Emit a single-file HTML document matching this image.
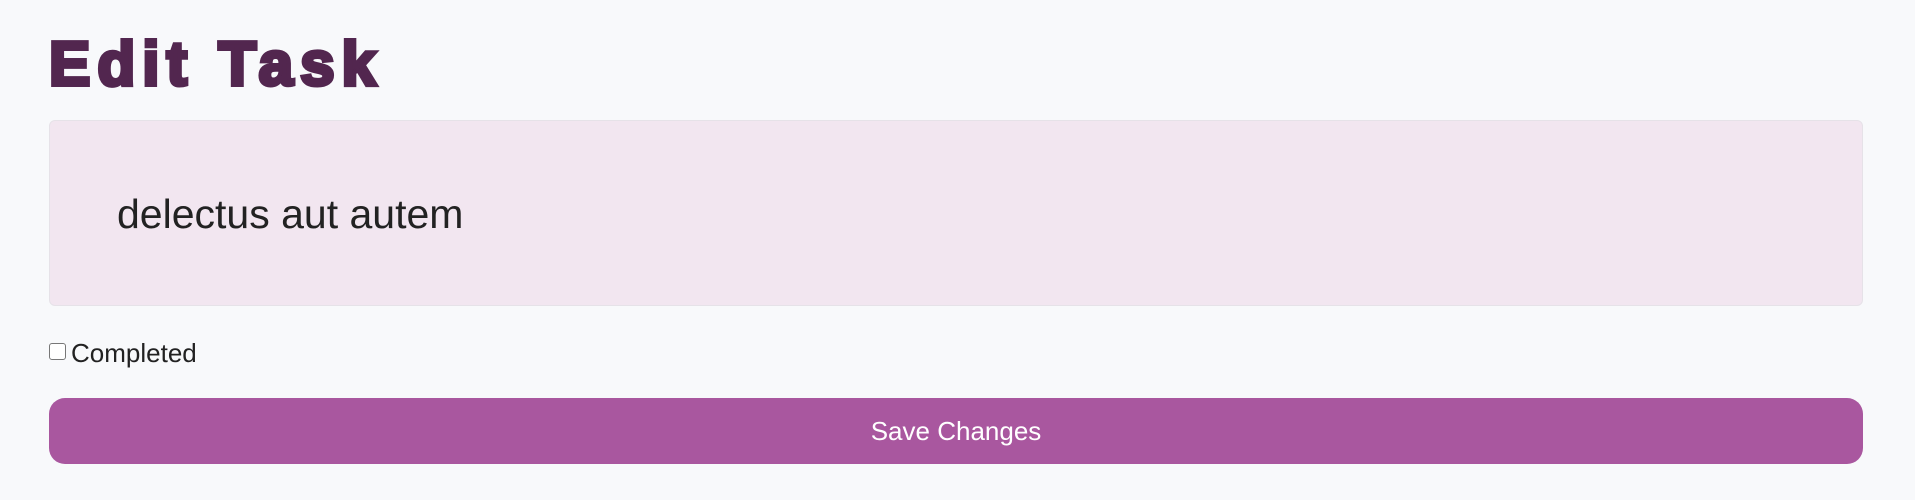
<!DOCTYPE html>
<html><head><style>
body{margin:0;background:#f8f9fb;width:1915px;height:500px;overflow:hidden;font-family:"Liberation Sans",sans-serif;}
h1{position:absolute;left:49px;top:25px;margin:0;font-size:62px;font-weight:900;color:#52264f;letter-spacing:7px;-webkit-text-stroke:4px #52264f;line-height:80px;}
.inp{position:absolute;left:49px;top:120px;width:1812px;height:184px;background:#f2e6f0;border:1px solid #e6e2e8;border-radius:6px;}
.inp span{position:absolute;left:67px;top:70px;font-size:41px;color:#222;}
.cb{position:absolute;left:49px;top:343px;width:15px;height:15px;border:1.5px solid #777;border-radius:3px;background:#fff;}
.lbl{position:absolute;left:71px;top:338px;font-size:26px;color:#222;}
.btn{position:absolute;left:49px;top:398px;width:1814px;height:66px;background:#a9579f;border-radius:16px;color:#fff;font-size:26px;text-align:center;line-height:66px;}
</style></head><body>
<h1>Edit Task</h1>
<div class="inp"><span>delectus aut autem</span></div>
<div class="cb"></div><div class="lbl">Completed</div>
<div class="btn">Save Changes</div>
</body></html>
